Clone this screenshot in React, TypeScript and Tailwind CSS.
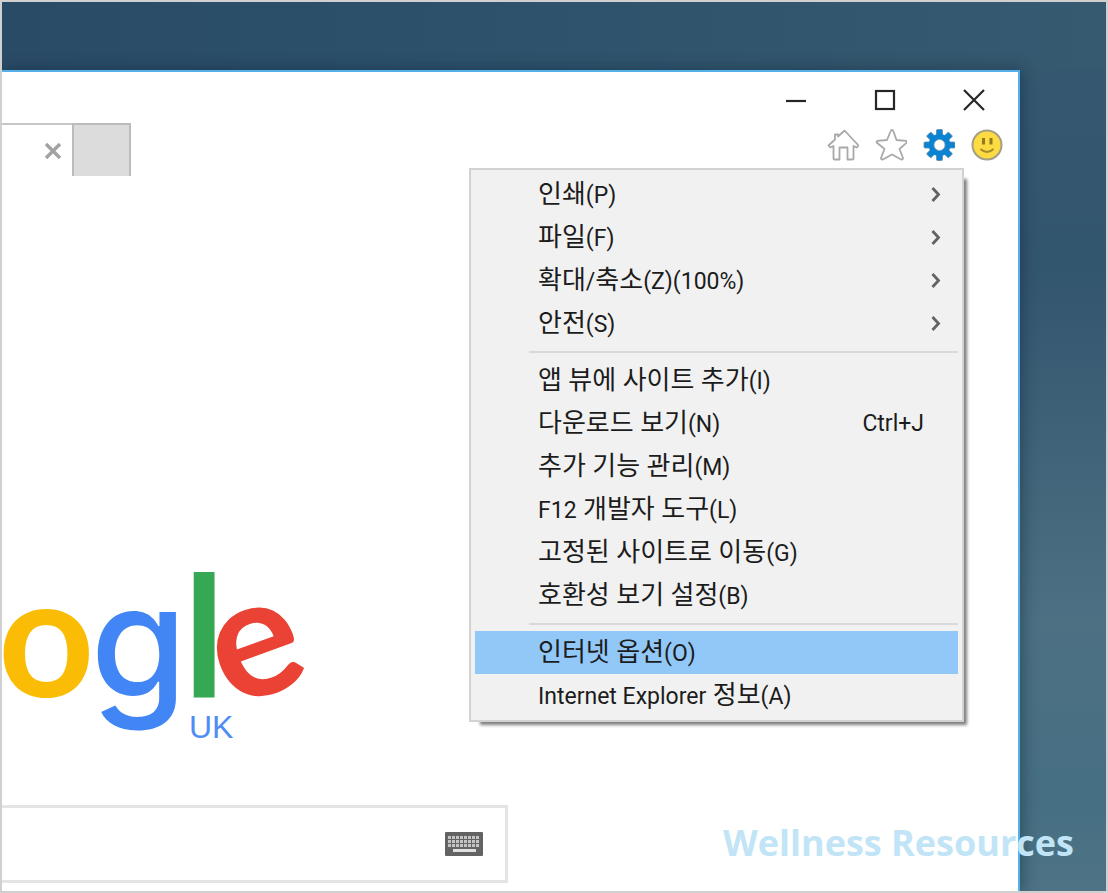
import type { ReactNode } from 'react'

type MenuEntry = {
  label: string
  shortcut?: string
  submenu?: boolean
  active?: boolean
}

const MENU_GROUPS: MenuEntry[][] = [
  [
    { label: '인쇄(P)', submenu: true },
    { label: '파일(F)', submenu: true },
    { label: '확대/축소(Z)(100%)', submenu: true },
    { label: '안전(S)', submenu: true },
  ],
  [
    { label: '앱 뷰에 사이트 추가(I)' },
    { label: '다운로드 보기(N)', shortcut: 'Ctrl+J' },
    { label: '추가 기능 관리(M)' },
    { label: 'F12 개발자 도구(L)' },
    { label: '고정된 사이트로 이동(G)' },
    { label: '호환성 보기 설정(B)' },
  ],
  [
    { label: '인터넷 옵션(O)', active: true },
    { label: 'Internet Explorer 정보(A)' },
  ],
]

// Latin runs are set a little smaller than the Hangul around them
function MixedText({ text }: { text: string }) {
  return (
    <span className="whitespace-pre">
      {text.split(/([!-~]+(?: [!-~]+)*)/).map((part, i) =>
        i % 2 === 1 ? (
          <span key={i} className="text-[23px]">
            {part}
          </span>
        ) : (
          part
        ),
      )}
    </span>
  )
}

function MenuItem({ label, shortcut, submenu, active }: MenuEntry) {
  return (
    <button
      role="menuitem"
      className={`flex h-[43px] w-full items-center pb-px pl-[63px] text-left ${submenu ? 'pr-4' : 'pr-[34px]'} ${
        active ? 'bg-[#91c8f7]' : 'hover:bg-[#e2e2e2]'
      }`}
    >
      <span className="flex-1">
        <MixedText text={label} />
      </span>
      {shortcut && <span className="text-[23px]">{shortcut}</span>}
      {submenu && (
        <svg viewBox="0 0 12 16" className="h-4 w-3" fill="none" stroke="#636363" strokeWidth="2.8">
          <path d="M2.5 2 8.500 8.500l-6 6.500" />
        </svg>
      )}
    </button>
  )
}

function ToolsMenu() {
  return (
    <div
      role="menu"
      className="absolute top-[96px] right-[54px] w-[495px] border-2 border-[#d2d2d2] bg-[#f1f1f1] px-1 py-[3px] font-['Roboto','Noto_Sans_CJK_KR',sans-serif] text-[26px] leading-none text-[#1c1c1c] shadow-[7px_7px_3px_-4px_rgba(0,0,0,0.5)]"
    >
      {MENU_GROUPS.map((group, i) => (
        <div key={i}>
          {i > 0 && (
            <div role="separator" className="py-[6px] pl-[54px]">
              <div className="h-[2px] bg-[#d9d9d9]" />
            </div>
          )}
          {group.map((entry) => (
            <MenuItem key={entry.label} {...entry} />
          ))}
        </div>
      ))}
    </div>
  )
}

function CaptionButton({ label, children }: { label: string; children: ReactNode }) {
  return (
    <button aria-label={label} className="flex h-14 w-[89px] items-center justify-center">
      <svg viewBox="0 0 22 22" className="size-[22px]" fill="none" stroke="#262626" strokeWidth="2.2">
        {children}
      </svg>
    </button>
  )
}

function ToolButton({ label, children }: { label: string; children: ReactNode }) {
  return (
    <button aria-label={label} className="size-8">
      <svg viewBox="0 0 32 32" className="size-8">
        {children}
      </svg>
    </button>
  )
}

const GEAR_ANGLES = [0, 45, 90, 135, 180, 225, 270, 315]

function Toolbar() {
  return (
    <div className="flex gap-4 pt-px pr-[15px]">
      <ToolButton label="홈">
        <path
          d="M17 2 11 7.500V5.500H8v5L1.500 16.500l1.700 2L6.500 17V29.500q0 1 1 1h5V18.500h8v12h5q1 0 1-1V17l3.300 1.500 1.700-2L18 2q-.5-.5-1 0Z"
          fill="#fff"
          stroke="#a9a9a9"
          strokeWidth="1.800"
          strokeLinejoin="round"
        />
      </ToolButton>
      <ToolButton label="즐겨찾기">
        <path
          d="M17 1q1 0 1.300 1L21.500 11l9.500.8q1.200.8.5 2L24.500 20l3.500 9q0 1.800-1.800 1.500L17 25.500l-9.200 5q-1.800.3-1.800-1.500l3.500-9-7.500-6.200q-1-1.200.5-2l9.500-.8L15.700 2q.3-1 1.300-1Z"
          fill="#fff"
          stroke="#a9a9a9"
          strokeWidth="1.800"
          strokeLinejoin="round"
        />
      </ToolButton>
      <ToolButton label="도구">
        <g fill="#0a84d2" stroke="#5f8ba6" strokeWidth="0.800">
          {GEAR_ANGLES.map((angle) => (
            <rect key={angle} x="13.5" y="0.500" width="6" height="8" rx="1" transform={`rotate(${angle} 16.500 16)`} />
          ))}
        </g>
        <circle cx="16.500" cy="16" r="8.200" fill="#fff" stroke="#0a84d2" strokeWidth="5.500" />
        <circle cx="16.500" cy="16" r="5.500" fill="#fff" stroke="#7d98a8" strokeWidth="0.800" />
      </ToolButton>
      <ToolButton label="의견 보내기">
        <circle cx="16" cy="16" r="14.500" fill="#fedb43" stroke="#a39e85" strokeWidth="2" />
        <path d="M12.500 9v6.500M20 9v6.500" stroke="#8f7922" strokeWidth="3" />
        <path d="M9.500 20q6.500 6 13 0" fill="none" stroke="#a48b2c" strokeWidth="2" />
      </ToolButton>
    </div>
  )
}

function TabStrip() {
  return (
    <div className="mt-[51px] flex h-[53px]">
      <div className="flex w-[70px] items-center justify-end border-t-2 border-[#c6c6c6] pr-[11px]">
        <button aria-label="탭 닫기">
          <svg viewBox="0 0 16 16" className="size-4" fill="none" stroke="#a3a3a3" strokeWidth="3.500">
            <path d="m1 1 14 14M15 1 1 15" />
          </svg>
        </button>
      </div>
      <button aria-label="새 탭" className="w-[59px] border-2 border-b-0 border-[#bbb] bg-[#dcdcdc]" />
    </div>
  )
}

function KeyboardIcon() {
  return (
    <svg viewBox="0 0 38 24" className="h-6 w-[38px]">
      <rect width="38" height="24" rx="1" fill="#636363" />
      {[4, 8, 12].map((y) =>
        [3, 7, 11, 15, 19, 23, 27, 31].map((x) => (
          <rect key={`${x}-${y}`} x={x} y={y} width="3" height="3" fill="#c4c4c4" />
        )),
      )}
      <rect x="8" y="17" width="23" height="3" fill="#e0e0e0" />
    </svg>
  )
}

function SearchPage() {
  return (
    <main className="flex flex-1 flex-col justify-end overflow-hidden pb-2">
      <div className="-ml-1 flex h-[136px] items-baseline font-['Lato',sans-serif] text-[168px] leading-[114px] font-bold">
        <span className="text-[#fbbc05]">o</span>
        <span className="-ml-1 font-['Inter',sans-serif] text-[156px] font-medium text-[#4285f4]">g</span>
        <span className="-ml-1 text-[#34a853]">l</span>
        <span className="-ml-5 -rotate-[20deg] text-[#ea4335]">e</span>
      </div>
      <p className="ml-[187px] font-['Liberation_Sans',sans-serif] text-[32px] leading-8 text-[#4f8df5]">UK</p>
      <div className="mt-[62px] flex h-[78px] w-[506px] items-center border-[3px] border-l-0 border-[#e4e4e4] pr-[22px]">
        <input aria-label="검색" className="h-full min-w-0 flex-1 outline-none" />
        <button aria-label="입력 도구">
          <KeyboardIcon />
        </button>
      </div>
    </main>
  )
}

export default function App() {
  return (
    <div className="relative flex min-h-screen flex-col overflow-hidden border-2 border-[#d0d0d0] bg-[linear-gradient(to_bottom,#365970_0%,#33566f_30%,#4d7083_70%,#466f83_90%,#4e7385_100%)]">
      <div className="h-[68px] bg-[linear-gradient(to_right,#2a4b66,#2c506a_35%,#365a70)]" />
      <div className="relative mr-[86px] flex flex-1 flex-col border-t-2 border-r-2 border-[#55b0ea] bg-white shadow-[2px_0_14px_1px_rgba(10,30,50,0.4)]">
        <header className="flex items-start justify-between">
          <TabStrip />
          <div className="flex flex-col items-end">
            <div className="flex">
              <CaptionButton label="최소화">
                <path d="M1 12h20" />
              </CaptionButton>
              <CaptionButton label="최대화">
                <rect x="2" y="2" width="18" height="18" />
              </CaptionButton>
              <CaptionButton label="닫기">
                <path d="m1 1 20 20M21 1 1 21" />
              </CaptionButton>
            </div>
            <Toolbar />
          </div>
        </header>
        <SearchPage />
        <ToolsMenu />
      </div>
      <p className="absolute right-8 bottom-6 font-['Open_Sans',sans-serif] text-[36px] leading-[48px] font-bold whitespace-nowrap text-[#c1e5f6]">
        Wellness Resources
      </p>
    </div>
  )
}
